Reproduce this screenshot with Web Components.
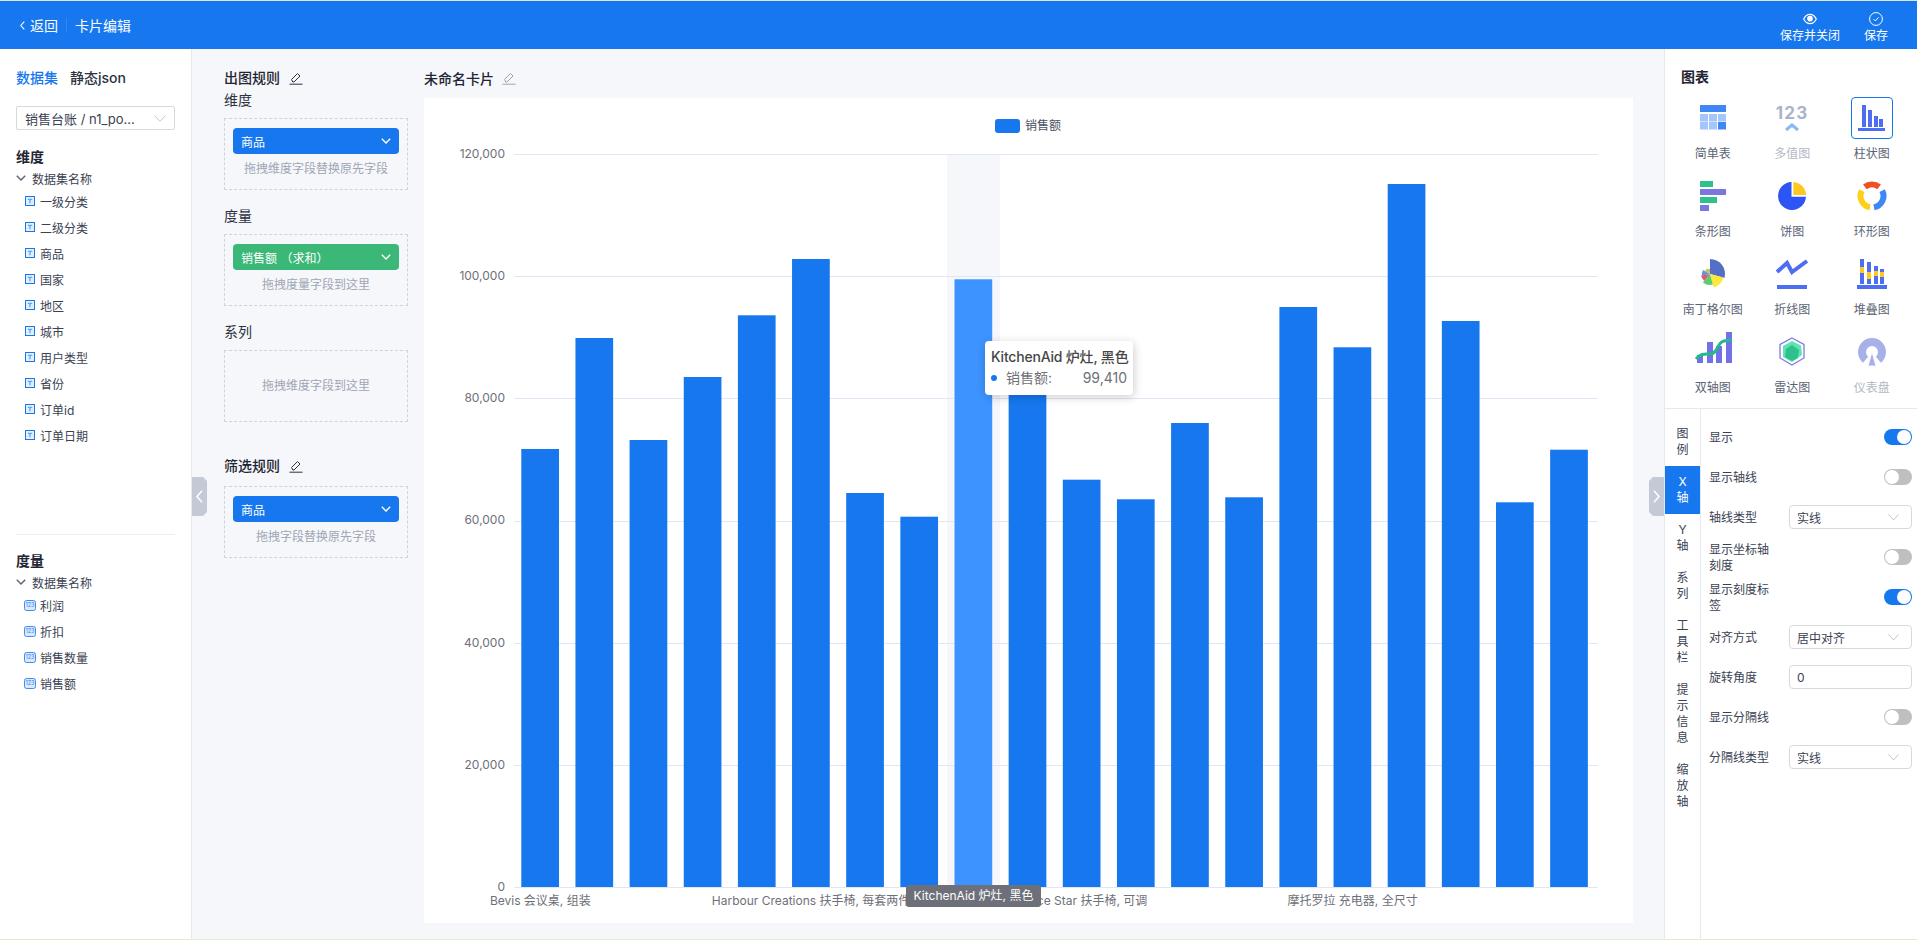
<!DOCTYPE html>
<html lang="zh-CN">
<head>
<meta charset="utf-8">
<title>卡片编辑</title>
<style>
  html, body { margin: 0; height: 100%; }
  body {
    width: 1917px;
    height: 940px;
    overflow: hidden;
    display: flex;
    flex-direction: column;
    font-family: Inter, "Noto Sans CJK SC", sans-serif;
    font-size: 12px;
    color: #2b3241;
    background: #f5f7fb;
  }
  .bottom-line { height: 1px; background: #e3ebc9; flex: none; }
  .workspace { flex: 1; display: flex; min-height: 0; position: relative; }
</style>
</head>
<body>
  <app-header></app-header>
  <div class="workspace">
    <data-panel></data-panel>
    <side-handle dir="left"></side-handle>
    <rule-panel></rule-panel>
    <chart-area></chart-area>
    <side-handle dir="right"></side-handle>
    <config-panel></config-panel>
  </div>
  <div class="bottom-line"></div>

<script>
const PEN_ICON = `<svg width="14" height="14" viewBox="0 0 14 14" fill="none" stroke="currentColor" stroke-width="1">
  <path d="M2.5 8.5 8.5 2.5l2.5 2.5-6 6H3.8z"/><path d="M0.5 13.2h13"/></svg>`;
const CHEVRON = `<svg width="10" height="6" viewBox="0 0 10 6" fill="none" stroke="currentColor" stroke-width="1.4"><path d="M.8.8 5 5 9.2.8"/></svg>`;

class AppHeader extends HTMLElement {
  constructor() {
    super();
    this.attachShadow({ mode: 'open' });
    this.shadowRoot.innerHTML = `
      <style>
        :host {
          display: flex;
          flex: none;
          align-items: center;
          height: 48px;
          background: #1677ee;
          border-top: 1px solid #dfe3ea;
          color: #fff;
          padding: 0 29px 0 20px;
        }
        .back { display: flex; align-items: center; gap: 5px; font-size: 14px; }
        .sep { width: 1px; height: 14px; background: rgba(255,255,255,.12); margin: 0 8px; }
        .title { font-size: 14px; }
        .actions { margin-left: auto; display: flex; gap: 24px; }
        .act { display: flex; flex-direction: column; align-items: center; font-size: 12px; line-height: 16px; gap: 2px; padding-top: 6px; }
        .act svg { height: 14px; }
        svg { display: block; }
      </style>
      <div class="back">
        <svg width="5" height="9" viewBox="0 0 5 9" fill="none" stroke="#fff" stroke-width="1.1"><path d="M4.3.6.8 4.5l3.5 3.9"/></svg>
        <span>返回</span>
      </div>
      <div class="sep"></div>
      <div class="title">卡片编辑</div>
      <div class="actions">
        <div class="act">
          <svg width="14" height="14" viewBox="0 -1 14 14" fill="none" stroke="#fff" stroke-width="1.2">
            <path d="M.7 6C2.2 2.9 4.4 1.3 7 1.3S11.800 2.900 13.300 6C11.800 9.100 9.600 10.700 7 10.700S2.200 9.100.7 6z"/>
            <circle cx="7" cy="5.600" r="2.300" fill="#fff"/>
          </svg>
          <span>保存并关闭</span>
        </div>
        <div class="act">
          <svg width="14" height="14" viewBox="0 0 14 14" fill="none" stroke="#fff" stroke-width="1">
            <circle cx="7" cy="7" r="6.400"/><path d="M4.500 7.100 6.300 8.900 9.500 5.400"/>
          </svg>
          <span>保存</span>
        </div>
      </div>
    `;
  }
}

class SideHandle extends HTMLElement {
  constructor() {
    super();
    this.attachShadow({ mode: 'open' });
    const right = this.getAttribute('dir') === 'right';
    this.shadowRoot.innerHTML = `
      <style>
        :host {
          position: absolute;
          top: 428px;
          ${right ? 'left: 1649px;' : 'left: 192px;'}
          width: 15px;
          height: 39px;
          display: flex;
          align-items: center;
          justify-content: center;
          background: #c3c9d5;
          clip-path: ${right
            ? 'polygon(4px 0, 100% 0, 100% 100%, 4px 100%, 0 calc(100% - 4px), 0 4px)'
            : 'polygon(0 0, calc(100% - 4px) 0, 100% 4px, 100% calc(100% - 4px), calc(100% - 4px) 100%, 0 100%)'};
        }
      </style>
      <svg width="7" height="13" viewBox="0 0 7 13" fill="none" stroke="#fff" stroke-width="1.500">
        <path d="${right ? 'M1 .8 6 6.500 1 12.200' : 'M6 .8 1 6.500 6 12.200'}"/>
      </svg>
    `;
  }
}

class FieldItem extends HTMLElement {
  constructor() {
    super();
    this.attachShadow({ mode: 'open' });
    const icon = this.getAttribute('type') === 'num'
      ? `<svg width="12" height="11" viewBox="0 0 12 11" style="margin-left:-1px;margin-right:-1px">
           <rect x=".5" y=".5" width="11" height="10" rx="2" fill="#dbe9fd" stroke="#3f8df2"/>
           <text x="6" y="7.400" font-size="5.500" text-anchor="middle" fill="#2f7eea" font-family="Inter, sans-serif">123</text>
         </svg>`
      : `<svg width="10" height="10" viewBox="0 0 10 10">
           <rect x=".5" y=".5" width="9" height="9" fill="#e4effd" stroke="#1677ee"/>
           <path d="M2.800 2.800h4.400v1.300H5.700v3.200H4.300V4.100H2.800z" fill="#6aa5f3"/>
         </svg>`;
    this.shadowRoot.innerHTML = `
      <style>
        :host { display: flex; align-items: center; height: 26px; padding-left: 9px; gap: 5px; font-size: 12px; color: #3a4252; }
        svg { flex: none; }
      </style>
      ${icon}<slot></slot>
    `;
  }
}

class FieldGroup extends HTMLElement {
  constructor() {
    super();
    this.attachShadow({ mode: 'open' });
    this.shadowRoot.innerHTML = `
      <style>
        :host { display: block; }
        h4 { margin: 0; font-size: 14px; font-weight: 700; line-height: 20px; color: #1f2533; }
        .root { display: flex; align-items: center; gap: 6px; height: 20px; margin-top: 1px; color: #3a4252; }
        .items { display: block; }
        svg { color: #5a6272; }
      </style>
      <h4>${this.getAttribute('title')}</h4>
      <div class="root">${CHEVRON}<span>数据集名称</span></div>
      <div class="items"><slot></slot></div>
    `;
  }
}

class DataPanel extends HTMLElement {
  constructor() {
    super();
    this.attachShadow({ mode: 'open' });
    const dims = ['一级分类', '二级分类', '商品', '国家', '地区', '城市', '用户类型', '省份', '订单id', '订单日期'];
    const nums = ['利润', '折扣', '销售数量', '销售额'];
    this.shadowRoot.innerHTML = `
      <style>
        :host {
          display: block;
          flex: none;
          box-sizing: border-box;
          width: 192px;
          background: #fff;
          border-right: 1px solid #e5e8ef;
          padding: 19px 16px 0;
        }
        .tabs { display: flex; gap: 12px; font-size: 14px; line-height: 20px; font-weight: 500; color: #2b3241; }
        .tabs .on { color: #1677ee; }
        .select {
          display: flex; align-items: center; justify-content: space-between;
          box-sizing: border-box; height: 24px; margin-top: 18px; padding: 0 8px;
          border: 1px solid #d9d9d9; border-radius: 2px; font-size: 13px; color: #3a4252;
        }
        .select svg { color: #c4c8d0; }
        .dims { margin-top: 17px; }
        hr { border: 0; height: 1px; background: #eceef3; margin: 86px 0 16px; }
      </style>
      <div class="tabs"><span class="on">数据集</span><span>静态json</span></div>
      <div class="select"><span>销售台账 / n1_po...</span>
        <svg width="12" height="7" viewBox="0 0 12 7" fill="none" stroke="currentColor"><path d="M.5.5 6 6.300 11.500.5"/></svg>
      </div>
      <field-group class="dims" title="维度">
        ${dims.map(d => `<field-item>${d}</field-item>`).join('')}
      </field-group>
      <hr>
      <field-group title="度量">
        ${nums.map(d => `<field-item type="num">${d}</field-item>`).join('')}
      </field-group>
    `;
  }
}

class FieldPill extends HTMLElement {
  constructor() {
    super();
    this.attachShadow({ mode: 'open' });
    this.shadowRoot.innerHTML = `
      <style>
        :host {
          display: flex; align-items: center; justify-content: space-between;
          height: 26px; padding: 0 8px; border-radius: 4px; flex: none;
          background: var(--pill, #1677ee); color: #fff; font-size: 12px;
        }
      </style>
      <span><slot></slot></span>${CHEVRON}
    `;
  }
}

class DropZone extends HTMLElement {
  constructor() {
    super();
    this.attachShadow({ mode: 'open' });
    this.shadowRoot.innerHTML = `
      <style>
        :host {
          display: flex; flex-direction: column; box-sizing: border-box;
          height: 72px; padding: 9px 8px 0; border: 1px dashed #cfd3da;
          color: #a0a6b4; font-size: 12px; text-align: center;
        }
        :host([empty]) { justify-content: center; padding-top: 0; }
        .hint { line-height: 20px; margin-top: 5px; }
        :host([empty]) .hint { margin-top: 0; }
      </style>
      <slot name="pill"></slot>
      <div class="hint"><slot></slot></div>
    `;
  }
}

class RulePanel extends HTMLElement {
  constructor() {
    super();
    this.attachShadow({ mode: 'open' });
    this.shadowRoot.innerHTML = `
      <style>
        :host { display: block; flex: none; box-sizing: border-box; width: 216px; padding: 19px 0 0 32px; color: #2b3241; }
        .head { display: flex; align-items: center; gap: 9px; font-size: 14px; line-height: 20px; font-weight: 500; color: #1f2533; }
        .label { font-size: 14px; line-height: 20px; }
        .first { margin-top: 2px; }
        .next { margin-top: 16px; }
        drop-zone { margin-top: 8px; }
        .filter { margin-top: 34px; }
        .filter + drop-zone { margin-top: 10px; }
        .green { --pill: #3bb877; }
        .head svg { color: #2b3241; }
      </style>
      <div class="head">出图规则 ${PEN_ICON}</div>
      <div class="label first">维度</div>
      <drop-zone><field-pill slot="pill">商品</field-pill>拖拽维度字段替换原先字段</drop-zone>
      <div class="label next">度量</div>
      <drop-zone><field-pill slot="pill" class="green">销售额 （求和）</field-pill>拖拽度量字段到这里</drop-zone>
      <div class="label next">系列</div>
      <drop-zone empty>拖拽维度字段到这里</drop-zone>
      <div class="head filter">筛选规则 ${PEN_ICON}</div>
      <drop-zone><field-pill slot="pill">商品</field-pill>拖拽字段替换原先字段</drop-zone>
    `;
  }
}

class BarChart extends HTMLElement {
  constructor() {
    super();
    this.attachShadow({ mode: 'open' });
    // bar tops in page pixels, read off the reference (index 9 is the one behind the tooltip)
    const tops = [449, 338, 440, 377, 315.3, 259, 493, 516.7, 279.3, 370, 479.7, 499.3, 423, 497.3, 307, 347.3, 184, 321, 502.3, 449.7];
    const active = 8;
    const yZero = 887, yStep = 122.17;
    const left = 514, right = 1598;
    const ticks = ['0', '20,000', '40,000', '60,000', '80,000', '100,000', '120,000'];
    const labels = { 0: 'Bevis 会议桌, 组装', 5: 'Harbour Creations 扶手椅, 每套两件', 10: 'Office Star 扶手椅, 可调', 15: '摩托罗拉 充电器, 全尺寸' };
    const barX = i => 521.3 + 54.15 * i;

    const grid = ticks.map((t, i) => {
      const y = yZero - yStep * i;
      const line = Math.floor(154.5 + yStep * (6 - i)) + 0.5;
      return `<line x1="${left}" x2="${right}" y1="${line}" y2="${line}" stroke="#e0e6f5"/>
        <text x="505" y="${y + 4}" text-anchor="end">${t}</text>`;
    }).join('');
    const bars = tops.map((t, i) =>
      `<rect x="${barX(i)}" y="${t}" width="37.700" height="${yZero - t}" fill="${i === active ? '#3d93ff' : '#1677ee'}"/>`).join('');
    const cats = Object.keys(labels).map(i =>
      `<text x="${barX(+i) + 19}" y="905" text-anchor="middle">${labels[i]}</text>`).join('');

    this.shadowRoot.innerHTML = `
      <style>
        :host { display: block; position: relative; height: 825px; background: #fff; }
        svg { display: block; font-size: 12px; fill: #6e7079; font-family: Inter, "Noto Sans CJK SC", sans-serif; }
        .tip {
          position: absolute; left: 561px; top: 243px; width: 148px; height: 54px; box-sizing: border-box;
          padding: 4px 6px; background: #fff; border-radius: 4px;
          box-shadow: 1px 2px 10px rgba(0,0,0,.2); font-size: 14px; line-height: 20px;
        }
        .tip b { display: block; font-weight: 500; color: #464646; white-space: nowrap; margin-top: 2px; letter-spacing: -.2px; }
        .row { display: flex; align-items: center; color: #6e7079; margin-top: 1px; }
        .dot { width: 6px; height: 6px; border-radius: 50%; background: #1677ee; margin: 0 9px 0 0; }
        .row span:last-child { margin-left: auto; }
        .axis-tip {
          position: absolute; left: 482px; top: 787px; width: 135px; height: 22px;
          background: #6e7079; color: #fff; border-radius: 3px; font-size: 12px;
          line-height: 22px; text-align: center; white-space: nowrap;
        }
      </style>
      <svg width="1209" height="825" viewBox="424 98 1209 825">
        <rect x="947" y="154" width="53" height="733" fill="#f5f7fb"/>
        ${grid}
        ${bars}
        <rect x="995" y="119" width="25" height="14" rx="3" fill="#1677ee"/>
        <text x="1025" y="130" fill="#4b5060">销售额</text>
        ${cats}
      </svg>
      <div class="tip">
        <b>KitchenAid 炉灶, 黑色</b>
        <div class="row"><i class="dot"></i><span>销售额:</span><span>99,410</span></div>
      </div>
      <div class="axis-tip">KitchenAid 炉灶, 黑色</div>
    `;
  }
}

class ChartArea extends HTMLElement {
  constructor() {
    super();
    this.attachShadow({ mode: 'open' });
    this.shadowRoot.innerHTML = `
      <style>
        :host { display: block; flex: none; box-sizing: border-box; width: 1256px; padding: 19px 31px 0 16px; }
        .head { display: flex; align-items: center; gap: 8px; height: 20px; font-size: 14px; font-weight: 500; color: #1f2533; }
        .head svg { color: #9aa3b5; }
        bar-chart { margin-top: 10px; }
      </style>
      <div class="head">未命名卡片 ${PEN_ICON}</div>
      <bar-chart></bar-chart>
    `;
  }
}

const CHART_ICONS = {
  table: `<rect x="8" y="8" width="26" height="7" fill="#3f87f5"/>
    ${[17, 25].map(y => [8, 17, 26].map(x =>
      `<rect x="${x}" y="${y}" width="8" height="7.500" fill="${x === 26 && y === 25 ? '#3f87f5' : '#a4c6fa'}"/>`).join('')).join('')}`,
  multi: `<text x="21" y="22" font-size="17" font-weight="700" text-anchor="middle" letter-spacing="1.200" fill="#a9b4cb" font-family="Inter, sans-serif">123</text>
    <path d="M15 33l6-5 6 5" fill="none" stroke="#86b9f8" stroke-width="3"/>`,
  bar: `<g fill="#4e6ef2"><rect x="11" y="8" width="4" height="22"/><rect x="17" y="13" width="4" height="17"/>
    <rect x="23" y="19" width="4" height="11"/><rect x="28" y="22" width="4" height="8"/><rect x="7" y="31" width="27" height="3"/></g>`,
  hbar: `<rect x="8" y="6" width="13" height="6" fill="#2ec08d"/><rect x="8" y="14" width="26" height="6" fill="#7a78e0"/>
    <rect x="8" y="22" width="17" height="6" fill="#2ec08d"/><rect x="8" y="30" width="9" height="6" fill="#7a78e0"/>`,
  pie: `<path d="M20.500 7A14 14 0 1 0 35 21.800H20.500z" fill="#2b56f5"/><path d="M22.300 7A14 14 0 0 1 35.200 20H22.300z" fill="#ffc81f"/>`,
  ring: `<g fill="none" stroke-width="6"><path d="M13.900 11.900A11.500 11.500 0 0 1 28.100 11.900" stroke="#f04e23"/>
    <path d="M31.150 15.600A11.500 11.500 0 0 1 23 32.300" stroke="#3f87f5"/><path d="M19 32.300A11.500 11.500 0 0 1 10.850 15.600" stroke="#ffcf1a"/></g>`,
  rose: `<path d="M18 21V6A15 15 0 0 1 32.500 24.900z" fill="#5470c6"/><path d="M18 21 31.500 24.600A14 14 0 0 1 21.600 34.500z" fill="#ffe83c"/>
    <path d="M18 21 20.850 31.600A11 11 0 0 1 10.900 29.400z" fill="#5fcb71"/><path d="M18 21 12.200 27.900A9 9 0 0 1 9.100 22.600z" fill="#d95b7a"/>
    <path d="M18 21 10.100 22.400A8 8 0 0 1 11.100 17z" fill="#6f8fd8"/><path d="M18 21 12.800 18A6 6 0 0 1 16 15.400z" fill="#a5cf6a"/>
    <path d="M18 21 16.300 16.300A5 5 0 0 1 18 16z" fill="#e6a04a"/>`,
  line: `<path d="M6 19 16 10l5 9 15-11" fill="none" stroke="#4e6ef2" stroke-width="4"/><rect x="6" y="32" width="30" height="4" fill="#4e6ef2"/>`,
  stack: `<rect x="6" y="32" width="30" height="4" fill="#4e6ef2"/>
    ${[[9, 6, 14, 6], [16, 9, 19, 7], [23, 13, 18, 5], [29, 16, 19, 5]].map(([x, y, cy, ch]) =>
      `<rect x="${x}" y="${y}" width="4" height="${31 - y}" fill="#4e6ef2"/><rect x="${x}" y="${cy}" width="4" height="${ch}" fill="#ffc81f"/>`).join('')}`,
  dual: `<g fill="#7272e6"><rect x="5" y="24" width="6" height="8"/><rect x="15" y="11" width="6" height="21"/>
    <rect x="24" y="15" width="6" height="17"/><rect x="34" y="1" width="6" height="31"/></g>
    <path d="M4 28C9 22 13 23 18 23 26 23 25 11 32 10L40 9" fill="none" stroke="#23b98a" stroke-width="3"/>`,
  radar: `<path d="M21 7 33 13.500V27L21 34 9 27V13.500z" fill="none" stroke="#7d7be6" stroke-width="1.300"/>
    <path d="M21 10 30 14.500 31 24 21 31 12 26V15z" fill="#5fe3b0"/><path d="M21 14 28 19 27 27 21 30 14 26 15 18z" fill="#2ec08d"/>`,
  gauge: `<path d="M14.600 28.700A10 10 0 1 1 27.400 28.700" fill="none" stroke="#a8b0ea" stroke-width="8"/>
    <path d="M21 21 17 35H25z" fill="#a8b0ea" stroke="#fff" stroke-width=".8"/>`
};

class ChartType extends HTMLElement {
  constructor() {
    super();
    this.attachShadow({ mode: 'open' });
    this.shadowRoot.innerHTML = `
      <style>
        :host { display: flex; flex-direction: column; align-items: center; height: 78px; font-size: 12px; line-height: 20px; color: #5a6375; }
        :host([disabled]) { color: #b4b9c4; }
        .box { width: 42px; height: 42px; box-sizing: border-box; border: 1px solid transparent; border-radius: 4px; }
        :host([selected]) .box { border-color: #1677ee; }
        svg { display: block; margin: -1px; }
        .name { margin-top: 5px; white-space: nowrap; }
      </style>
      <div class="box"><svg width="42" height="42" viewBox="0 0 42 42">${CHART_ICONS[this.getAttribute('icon')]}</svg></div>
      <div class="name"><slot></slot></div>
    `;
  }
}

class ToggleSwitch extends HTMLElement {
  constructor() {
    super();
    this.attachShadow({ mode: 'open' });
    this.shadowRoot.innerHTML = `
      <style>
        :host { display: block; width: 28px; height: 16px; border-radius: 8px; background: #bfbfbf; position: relative; flex: none; margin-left: auto; }
        :host([on]) { background: #1677ee; }
        i { position: absolute; top: 1px; left: 1px; width: 14px; height: 14px; border-radius: 50%; background: #fff; }
        :host([on]) i { left: 13px; }
      </style>
      <i></i>
    `;
  }
}

class SelectBox extends HTMLElement {
  constructor() {
    super();
    this.attachShadow({ mode: 'open' });
    const arrow = this.hasAttribute('plain') ? '' :
      `<svg width="11" height="7" viewBox="0 0 11 7" fill="none" stroke="#bfc3cb"><path d="M.5.5 5.500 6 10.500.5"/></svg>`;
    this.shadowRoot.innerHTML = `
      <style>
        :host {
          display: flex; align-items: center; justify-content: space-between; flex: none;
          box-sizing: border-box; width: 123px; height: 24px; margin-left: auto;
          padding: 0 12px 0 7px; border: 1px solid #d9d9d9; border-radius: 4px;
          background: #fff; font-size: 12px; color: #3a4252;
        }
      </style>
      <slot></slot>${arrow}
    `;
  }
}

class FormRow extends HTMLElement {
  constructor() {
    super();
    this.attachShadow({ mode: 'open' });
    this.shadowRoot.innerHTML = `
      <style>
        :host { display: flex; align-items: center; height: 40px; font-size: 12px; color: #3a4252; }
        .label { width: 64px; line-height: 16px; flex: none; padding-top: 2px; }
      </style>
      <div class="label"><slot name="label"></slot></div>
      <slot></slot>
    `;
  }
}

class ConfigPanel extends HTMLElement {
  constructor() {
    super();
    this.attachShadow({ mode: 'open' });
    const types = [
      ['table', '简单表'], ['multi', '多值图', 'disabled'], ['bar', '柱状图', 'selected'],
      ['hbar', '条形图'], ['pie', '饼图'], ['ring', '环形图'],
      ['rose', '南丁格尔图'], ['line', '折线图'], ['stack', '堆叠图'],
      ['dual', '双轴图'], ['radar', '雷达图'], ['gauge', '仪表盘', 'disabled']
    ];
    const tabs = ['图例', 'X轴', 'Y轴', '系列', '工具栏', '提示信息', '缩放轴'];
    const row = (label, control) => `<form-row><span slot="label">${label}</span>${control}</form-row>`;
    this.shadowRoot.innerHTML = `
      <style>
        :host { display: flex; flex-direction: column; flex: none; box-sizing: border-box; width: 253px; background: #fff; border-left: 1px solid #e5e8ef; }
        .charts { height: 360px; box-sizing: border-box; padding: 18px 0 0 16px; border-bottom: 1px solid #e5e8ef; flex: none; }
        h4 { margin: 0; font-size: 14px; font-weight: 700; line-height: 20px; color: #1f2533; }
        .grid { display: grid; grid-template-columns: repeat(3, 79.500px); margin: 10px 0 0 -8px; }
        .bottom { flex: 1; display: flex; min-height: 0; }
        .tabs { width: 36px; box-sizing: border-box; flex: none; padding-top: 9px; border-right: 1px solid #e5e8ef; }
        .tab { padding: 8px 0; width: 35px; text-align: center; line-height: 16px; font-size: 12px; color: #3a4252; }
        .tab.on { background: #1677ee; color: #fff; }
        .form { flex: 1; padding: 8px 5px 0 8px; }
      </style>
      <div class="charts">
        <h4>图表</h4>
        <div class="grid">
          ${types.map(([i, n, s]) => `<chart-type icon="${i}" ${s || ''}>${n}</chart-type>`).join('')}
        </div>
      </div>
      <div class="bottom">
        <div class="tabs">
          ${tabs.map((t, i) => `<div class="tab ${i === 1 ? 'on' : ''}">${[...t].join('<br>')}</div>`).join('')}
        </div>
        <div class="form">
          ${row('显示', '<toggle-switch on></toggle-switch>')}
          ${row('显示轴线', '<toggle-switch></toggle-switch>')}
          ${row('轴线类型', '<select-box>实线</select-box>')}
          ${row('显示坐标轴刻度', '<toggle-switch></toggle-switch>')}
          ${row('显示刻度标签', '<toggle-switch on></toggle-switch>')}
          ${row('对齐方式', '<select-box>居中对齐</select-box>')}
          ${row('旋转角度', '<select-box plain>0</select-box>')}
          ${row('显示分隔线', '<toggle-switch></toggle-switch>')}
          ${row('<span style="white-space:nowrap">分隔线类型</span>', '<select-box>实线</select-box>')}
        </div>
      </div>
    `;
  }
}

customElements.define('app-header', AppHeader);
customElements.define('side-handle', SideHandle);
customElements.define('field-item', FieldItem);
customElements.define('field-group', FieldGroup);
customElements.define('data-panel', DataPanel);
customElements.define('field-pill', FieldPill);
customElements.define('drop-zone', DropZone);
customElements.define('rule-panel', RulePanel);
customElements.define('bar-chart', BarChart);
customElements.define('chart-area', ChartArea);
customElements.define('chart-type', ChartType);
customElements.define('toggle-switch', ToggleSwitch);
customElements.define('select-box', SelectBox);
customElements.define('form-row', FormRow);
customElements.define('config-panel', ConfigPanel);
</script>
</body>
</html>
